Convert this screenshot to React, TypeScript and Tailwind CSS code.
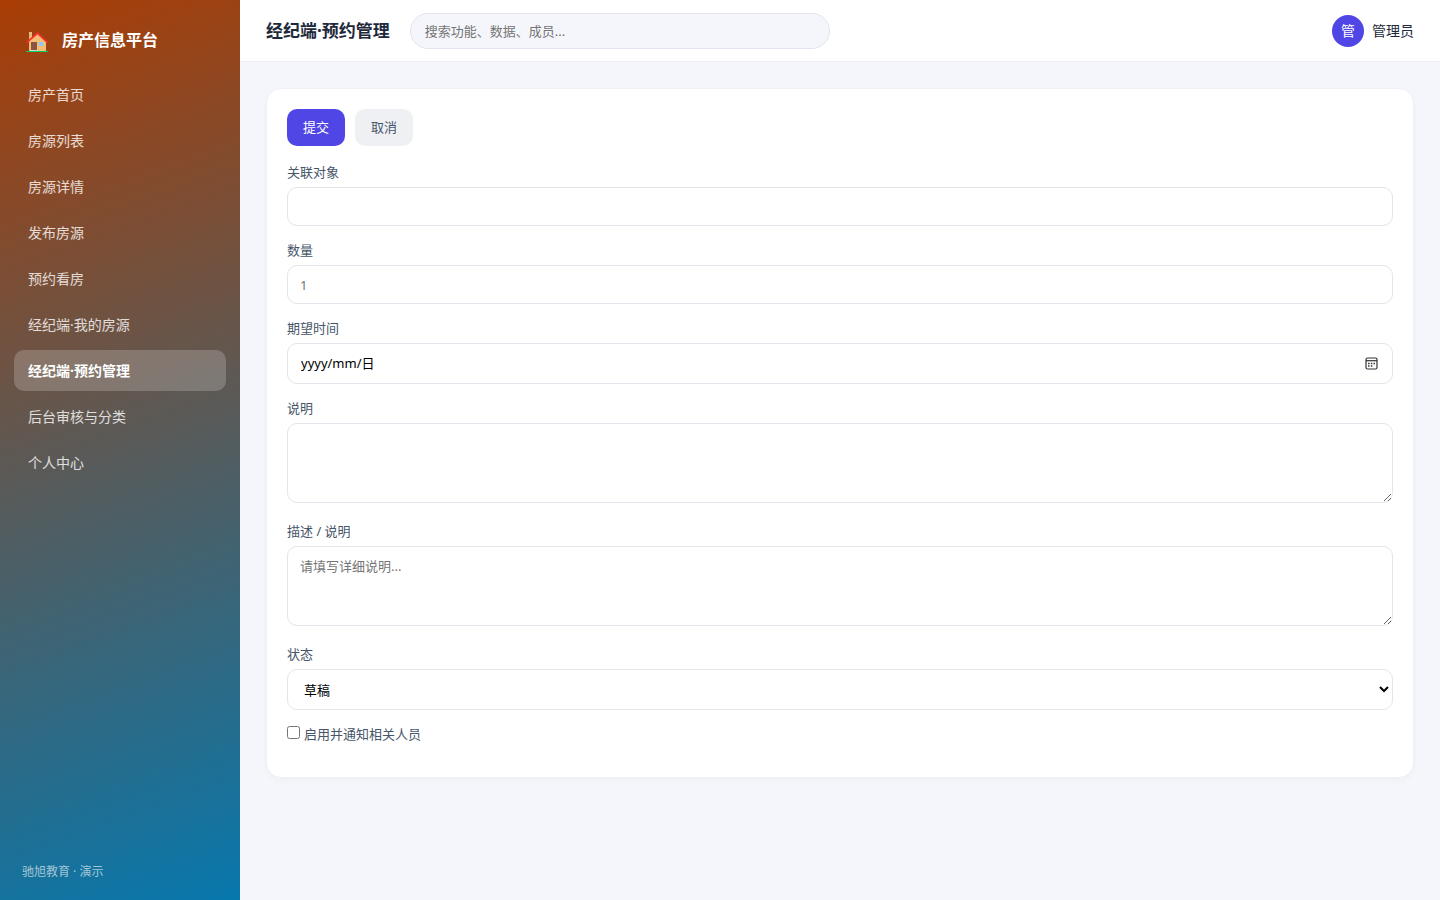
import React, { useState } from 'react';
import { clsx } from 'clsx';

const navItems = [
    '房产首页',
    '房源列表',
    '房源详情',
    '发布房源',
    '预约看房',
    '经纪端·我的房源',
    '经纪端·预约管理',
    '后台审核与分类',
    '个人中心'
];

const HouseIcon = () => (
    <svg viewBox="0 0 22 20" className="w-[22px] h-5 mt-1 shrink-0" aria-hidden="true">
        <path d="M3 0h3v8H3z" fill="#e8b878" />
        <path d="M11.500 1 L20 9.500V19H3V9.500z" fill="#f2bd75" />
        <path d="M11.500 0 L22 10l-1 1.300L11.500 2.600 1 11.300 0 10z" fill="#f8312f" />
        <path d="M5 10h6v8H5z" fill="#8c5543" />
        <path d="M4 18h8v1H4z" fill="#d3d3d3" />
        <path d="M13 10h4v4h-4z" fill="#83cbff" />
        <path d="M0 19h22v1H0z" fill="#00d26a" />
    </svg>
);

const CalendarIcon = () => (
    <svg viewBox="0 0 13 13" className="w-[13px] h-[13px]" fill="none" aria-hidden="true">
        <rect x="1" y="1" width="11" height="11" rx="1.500" stroke="#333" strokeWidth="1.200" />
        <path d="M1 3.700h11" stroke="#333" strokeWidth="1.200" />
        <path d="M3 6.500h1.500M5.800 6.500h1.500M8.500 6.500H10M3 9h1.500M5.800 9h1.500" stroke="#333" strokeWidth="1.300" />
    </svg>
);

const Sidebar = () => {
    const [active, setActive] = useState('经纪端·预约管理');

    return (
        <aside className="w-60 shrink-0 flex flex-col px-3.5 pb-[19px] bg-[linear-gradient(160deg,#aa3d05,#0778ad)]">
            <div className="flex items-center gap-3.5 px-3 pt-7 pb-[22px] text-base leading-6 font-bold text-white">
                <HouseIcon />
                <span>房产信息平台</span>
            </div>
            <nav className="flex flex-col gap-[5px]">
                {navItems.map((item) => (
                    <a
                        key={item}
                        href="#"
                        onClick={() => setActive(item)}
                        className={clsx(
                            'block rounded-[10px] px-3.5 py-2.5 text-sm leading-[21px]',
                            item === active ? 'bg-white/20 font-bold text-white' : 'text-white/80'
                        )}
                    >
                        {item}
                    </a>
                ))}
            </nav>
            <div className="mt-auto px-2 text-xs leading-[18px] text-white/60">驰旭教育 · 演示</div>
        </aside>
    );
};

const Header = () => (
    <header className="flex items-center gap-5 h-[62px] px-[26px] bg-white border-b border-[#eceef3]">
        <h1 className="text-[17px] leading-6 font-bold text-[#1e293b]">经纪端·预约管理</h1>
        <input
            type="search"
            aria-label="搜索"
            placeholder="搜索功能、数据、成员..."
            className="w-[420px] h-9 px-3.5 rounded-full border border-[#e2e5ee] bg-[#f5f6fb] text-[13px] placeholder:text-[#757575] outline-none"
        />
        <div className="ml-auto flex items-center gap-2 text-sm text-[#1e293b]">
            <span className="flex items-center justify-center w-8 h-8 rounded-full bg-[#4f46e5] text-white">管</span>
            <span>管理员</span>
        </div>
    </header>
);

interface FieldProps {
    id: string;
    label: string;
    children: React.ReactNode;
    className?: string;
}

const Field = ({ id, label, children, className }: FieldProps) => (
    <div className={clsx('flex flex-col gap-[5px]', className)}>
        <label htmlFor={id} className="text-[13px] leading-5 text-[#475569]">{label}</label>
        {children}
    </div>
);

const box = 'w-full rounded-[10px] border border-[#e3e4ec] bg-white px-3 text-[13px] text-black';
const control = clsx(box, 'block placeholder:text-[#757575]');

const BookingForm = () => (
    <form
        onSubmit={(e) => e.preventDefault()}
        className="rounded-[15px] border border-[#f0f1f6] bg-white p-5 pb-[33px] shadow-[0_2px_6px_rgba(30,41,59,0.03)]"
    >
        <div className="flex gap-2.5 mb-4">
            <button type="submit" className="h-[37px] px-4 rounded-[10px] bg-[#4f46e5] text-[13px] text-white">提交</button>
            <button type="button" className="h-[37px] px-4 rounded-[10px] bg-[#eef0f4] text-[13px] text-[#475569]">取消</button>
        </div>
        <Field id="target" label="关联对象" className="mb-3.5">
            <input id="target" type="text" className={clsx(control, 'h-[39px]')} />
        </Field>
        <Field id="count" label="数量" className="mb-3.5">
            <input id="count" type="number" placeholder="1" className={clsx(control, 'h-[39px]')} />
        </Field>
        <Field id="date" label="期望时间" className="mb-3.5">
            <div className={clsx(box, 'flex items-center h-[41px]')}>
                <input
                    id="date"
                    type="text"
                    placeholder="yyyy/mm/日"
                    className="flex-1 min-w-0 px-px outline-none placeholder:text-black"
                />
                <button type="button" aria-label="选择日期" className="mr-0.5">
                    <CalendarIcon />
                </button>
            </div>
        </Field>
        <Field id="note" label="说明" className="mb-[18px]">
            <textarea id="note" className={clsx(control, 'h-20 py-2.5')} />
        </Field>
        <Field id="detail" label="描述 / 说明" className="mb-[18px]">
            <textarea id="detail" placeholder="请填写详细说明..." className={clsx(control, 'h-20 py-2.5')} />
        </Field>
        <Field id="status" label="状态" className="mb-3.5">
            <select id="status" className={clsx(control, 'h-[41px]')}>
                <option>草稿</option>
                <option>已提交</option>
            </select>
        </Field>
        <label className="flex w-fit items-center gap-1 text-[13px] leading-5 text-[#475569]">
            <input type="checkbox" className="w-[13px] h-[13px] mb-1" />
            启用并通知相关人员
        </label>
    </form>
);

const App = () => (
    <div className="flex min-h-screen bg-[#f5f6fb] font-['Noto_Sans','Noto_Sans_CJK_SC',sans-serif]">
        <Sidebar />
        <div className="flex-1 min-w-0">
            <Header />
            <main className="p-[26px]">
                <BookingForm />
            </main>
        </div>
    </div>
);

export default App;
